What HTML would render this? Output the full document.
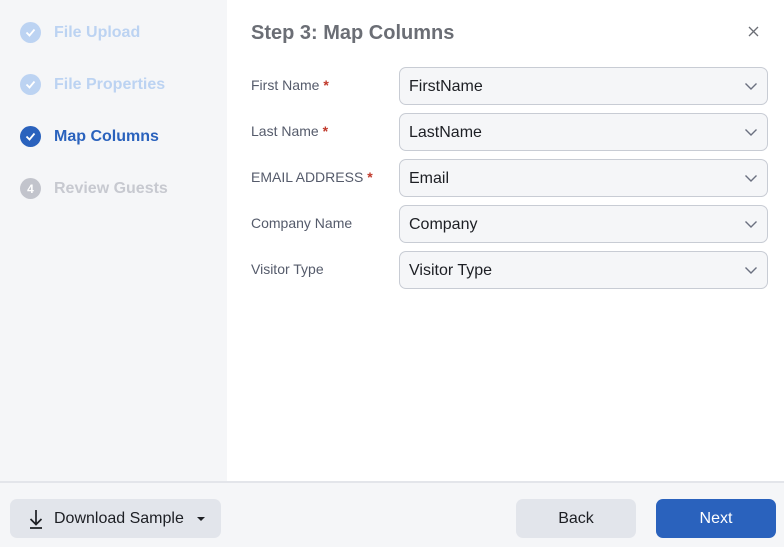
<!DOCTYPE html>
<html><head><meta charset="utf-8"><style>
*{box-sizing:border-box;margin:0;padding:0}
body{width:784px;height:547px;overflow:hidden;font-family:"Liberation Sans",Arial,sans-serif;background:#fff;position:relative}
.side{position:absolute;left:0;top:0;width:227px;height:481px;background:#f5f6f8}
.step{position:absolute;left:20px;display:flex;align-items:center;font-size:16px;font-weight:bold}
.dot{width:21px;height:21px;border-radius:50%;display:flex;align-items:center;justify-content:center;margin-right:13px;color:#fff;font-size:12px}
h1{position:absolute;left:251px;top:22px;font-size:20px;color:#6b6e75;font-weight:bold}
.x{position:absolute;left:747px;top:25px}
.lbl{position:absolute;left:251px;font-size:14px;color:#555b6b}
.lbl b{color:#c0392b;font-weight:bold}
.sel{position:absolute;left:399px;width:369px;height:38px;border:1px solid #c8ccd4;border-radius:7px;background:#f5f6f8;font-size:16px;color:#1d1f24;padding:0 0 0 9px;line-height:38px}
.sel svg{position:absolute;right:9px;top:14px}
.foot{position:absolute;left:0;top:481px;width:784px;height:66px;background:#f5f6f8;border-top:2px solid #e3e5ea}
.btn{position:absolute;top:16px;height:39px;border-radius:7px;font-size:16px;display:flex;align-items:center;justify-content:center}
</style></head><body>
<div class="side">
<div class="step" style="top:22px;color:#bcd3f2"><div class="dot" style="background:#bcd3f2"><svg width="11" height="9" viewBox="0 0 11 9"><path d="M1.5 4.5l3 3 5-6" stroke="#fff" stroke-width="1.8" fill="none"/></svg></div>File Upload</div>
<div class="step" style="top:74px;color:#bcd3f2"><div class="dot" style="background:#bcd3f2"><svg width="11" height="9" viewBox="0 0 11 9"><path d="M1.5 4.5l3 3 5-6" stroke="#fff" stroke-width="1.8" fill="none"/></svg></div>File Properties</div>
<div class="step" style="top:126px;color:#2a62bd"><div class="dot" style="background:#2a62bd"><svg width="11" height="9" viewBox="0 0 11 9"><path d="M1.5 4.5l3 3 5-6" stroke="#fff" stroke-width="1.8" fill="none"/></svg></div>Map Columns</div>
<div class="step" style="top:178px;color:#c7c9d0"><div class="dot" style="background:#c2c4cc">4</div>Review Guests</div>
</div>
<h1>Step 3: Map Columns</h1>
<svg class="x" width="13" height="13" viewBox="0 0 13 13"><path d="M2 2l9 9M11 2L2 11" stroke="#6b6e75" stroke-width="1.3"/></svg>
<div class="lbl" style="top:77px">First Name <b>*</b></div>
<div class="lbl" style="top:123px">Last Name <b>*</b></div>
<div class="lbl" style="top:169px">EMAIL ADDRESS <b>*</b></div>
<div class="lbl" style="top:215px">Company Name</div>
<div class="lbl" style="top:261px">Visitor Type</div>
<div class="sel" style="top:67px">FirstName<svg width="14" height="9" viewBox="0 0 14 9"><path d="M1.5 1.5l5.5 5.5 5.5-5.5" stroke="#6b7080" stroke-width="1.4" fill="none"/></svg></div>
<div class="sel" style="top:113px">LastName<svg width="14" height="9" viewBox="0 0 14 9"><path d="M1.5 1.5l5.5 5.5 5.5-5.5" stroke="#6b7080" stroke-width="1.4" fill="none"/></svg></div>
<div class="sel" style="top:159px">Email<svg width="14" height="9" viewBox="0 0 14 9"><path d="M1.5 1.5l5.5 5.5 5.5-5.5" stroke="#6b7080" stroke-width="1.4" fill="none"/></svg></div>
<div class="sel" style="top:205px">Company<svg width="14" height="9" viewBox="0 0 14 9"><path d="M1.5 1.5l5.5 5.5 5.5-5.5" stroke="#6b7080" stroke-width="1.4" fill="none"/></svg></div>
<div class="sel" style="top:251px">Visitor Type<svg width="14" height="9" viewBox="0 0 14 9"><path d="M1.5 1.5l5.5 5.5 5.5-5.5" stroke="#6b7080" stroke-width="1.4" fill="none"/></svg></div>
<div class="foot">
<div class="btn" style="left:10px;width:211px;background:#e2e5eb;color:#1d1f24;justify-content:flex-start;padding-left:18px"><svg width="16" height="20" viewBox="0 0 16 20" style="margin-right:10px"><path d="M8 1v14M2.5 10l5.5 5.5 5.5-5.5M2 19h12" stroke="#1d1f24" stroke-width="1.7" fill="none"/></svg>Download Sample<svg width="10" height="6" viewBox="0 0 10 6" style="margin-left:12px"><path d="M1 1h8L5 5z" fill="#1d1f24"/></svg></div>
<div class="btn" style="left:516px;width:120px;background:#e2e5eb;color:#1d1f24">Back</div>
<div class="btn" style="left:656px;width:120px;background:#2a62bd;color:#fff">Next</div>
</div>
</body></html>
